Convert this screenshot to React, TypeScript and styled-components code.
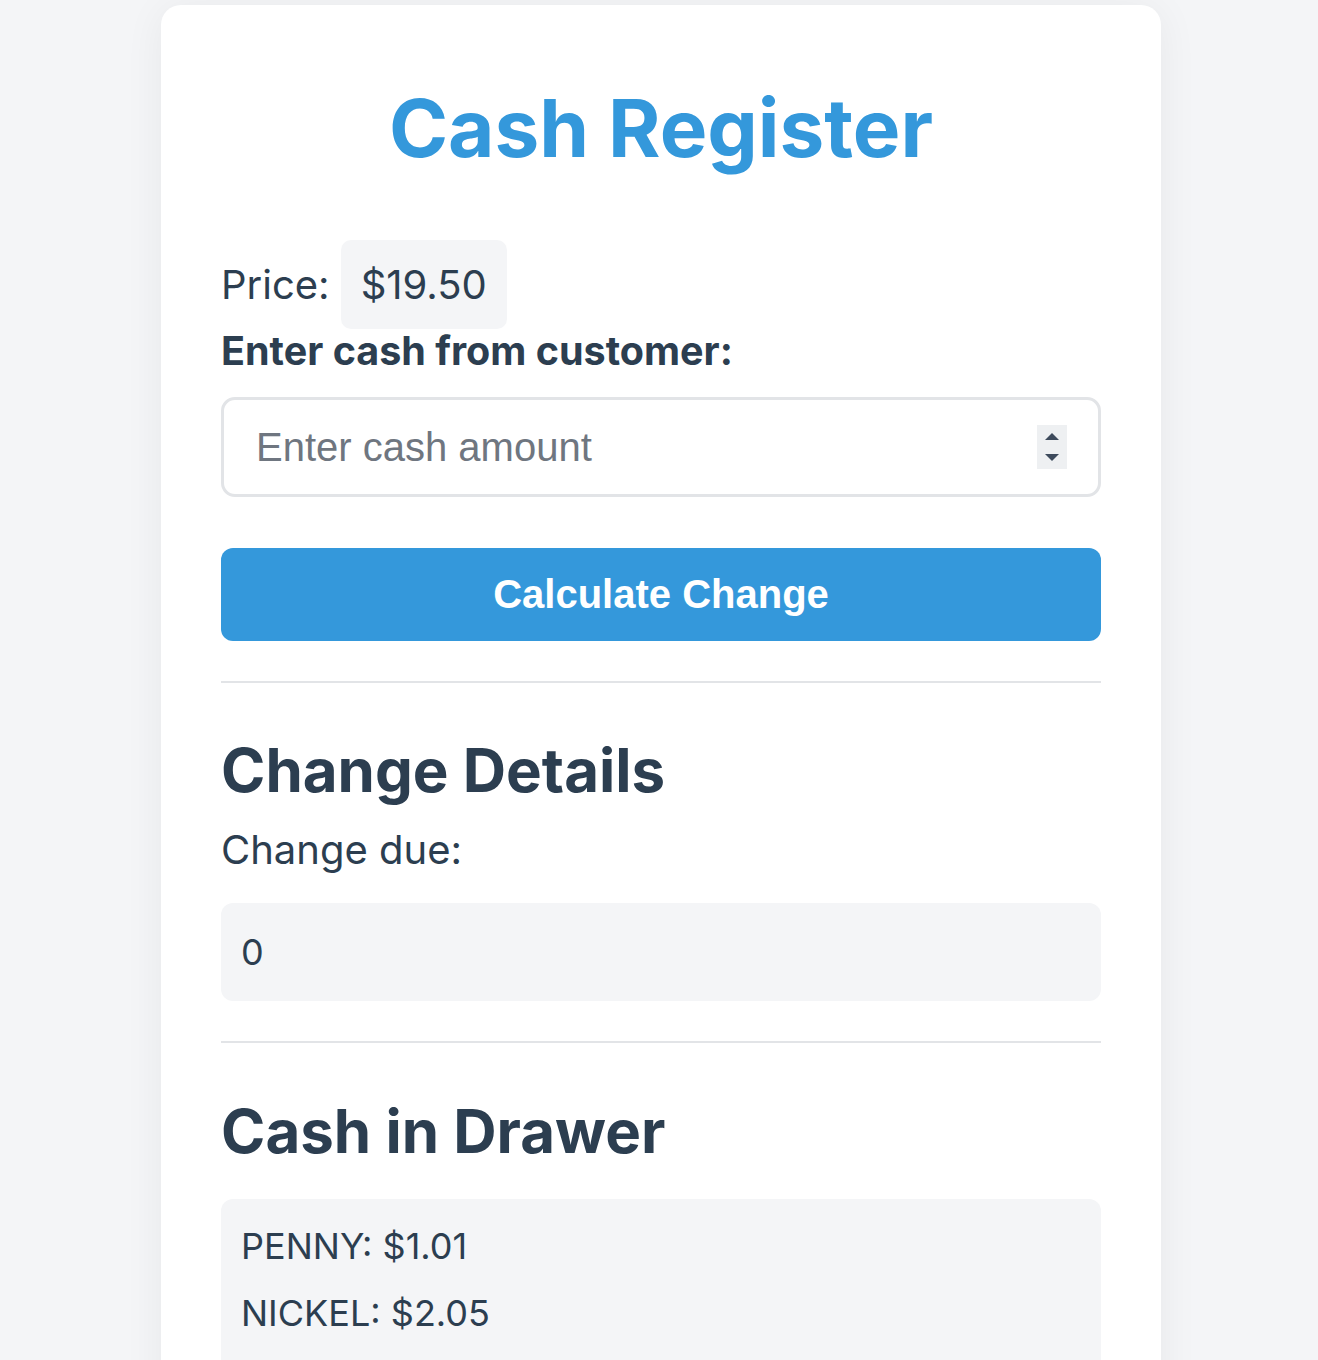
import React, { useState } from "react";
import styled, { createGlobalStyle } from "styled-components";

const GlobalStyle = createGlobalStyle`
  * {
    box-sizing: border-box;
  }

  body {
    margin: 0;
    background-color: #f4f5f7;
    font-family: Inter, "Noto Sans", sans-serif;
    color: #2c3e50;
  }
`;

const Page = styled.div`
  display: flex;
  justify-content: center;
  padding: 5px 0 0 4px;
  min-height: 1360px;
`;

const Card = styled.main`
  width: 1000px;
  background-color: #fff;
  border-radius: 20px;
  padding: 74px 60px 60px;
  box-shadow: 0 4px 40px rgba(0, 0, 0, 0.06);
`;

const Title = styled.h1`
  margin: 0 0 64px;
  font-size: 80px;
  font-weight: 700;
  color: #3498db;
  text-align: center;
  line-height: normal;
`;

const PriceRow = styled.div`
  display: flex;
  align-items: center;
  gap: 11px;
  font-size: 40px;
`;

const PriceTag = styled.span`
  display: inline-block;
  padding: 20px;
  border-radius: 10px;
  background-color: #f4f5f7;
`;

const Label = styled.label`
  display: block;
  margin: -2px 0 22px;
  font-size: 39.5px;
  font-weight: 700;
`;

const InputWrapper = styled.div`
  position: relative;
`;

const CashInput = styled.input`
  display: block;
  width: 100%;
  padding: 25px 32px 24px;
  border: 3px solid #e2e4e7;
  border-radius: 14px;
  font-family: "Liberation Sans", Arial, sans-serif;
  font-size: 40px;
  color: #2c3e50;
  outline: none;
  -moz-appearance: textfield;

  &::placeholder {
    color: #6f7680;
  }

  &::-webkit-inner-spin-button,
  &::-webkit-outer-spin-button {
    -webkit-appearance: none;
    margin: 0;
  }
`;

const Spinner = styled.div`
  position: absolute;
  top: 50%;
  right: 34px;
  transform: translateY(-50%);
  width: 30px;
  height: 44px;
  display: flex;
  flex-direction: column;
  align-items: center;
  justify-content: space-between;
  padding: 8px 0;
  background-color: #eef0f2;
  pointer-events: none;
`;

const CalculateButton = styled.button`
  display: block;
  width: 100%;
  margin-top: 51px;
  padding: 24px;
  border: none;
  border-radius: 12px;
  background-color: #3498db;
  color: #fff;
  font-family: "Liberation Sans", Arial, sans-serif;
  font-size: 40px;
  font-weight: 700;
  cursor: pointer;
`;

const Divider = styled.hr`
  margin: 40px 0 0;
  border: none;
  border-top: 2px solid #e2e4e7;
`;

const SectionTitle = styled.h2<{ $top: number; $gap: number }>`
  margin: ${(p) => p.$top}px 0 ${(p) => p.$gap}px;
  font-size: 60px;
  font-weight: 700;
  line-height: normal;
`;

const Text = styled.p`
  margin: 0 0 29px;
  font-size: 40px;
`;

const InfoBox = styled.div`
  padding: 27px 20px;
  border-radius: 12px;
  background-color: #f4f5f7;
  font-size: 36px;
`;

const DrawerBox = styled.div`
  display: flex;
  flex-direction: column;
  gap: 23px;
  padding: 25px 20px;
  border-radius: 12px;
  background-color: #f4f5f7;
  font-size: 36px;
`;

const drawer: [string, number][] = [
  ["PENNY", 1.01],
  ["NICKEL", 2.05],
  ["DIME", 3.1],
  ["QUARTER", 4.25],
  ["ONE", 90],
  ["FIVE", 55],
  ["TEN", 20],
  ["TWENTY", 60],
  ["ONE HUNDRED", 100],
];

const App: React.FC = () => {
  const [cash, setCash] = useState("");

  return (
    <>
      <GlobalStyle />
      <Page>
        <Card>
          <Title>Cash Register</Title>
          <PriceRow>
            Price:
            <PriceTag>$19.50</PriceTag>
          </PriceRow>
          <Label htmlFor="cash">Enter cash from customer:</Label>
          <InputWrapper>
            <CashInput
              id="cash"
              type="number"
              placeholder="Enter cash amount"
              value={cash}
              onChange={(e) => setCash(e.target.value)}
            />
            <Spinner>
              <svg width="14" height="7" viewBox="0 0 14 7">
                <path d="M7 0 L14 7 L0 7 Z" fill="#3d4a5c" />
              </svg>
              <svg width="14" height="7" viewBox="0 0 14 7">
                <path d="M0 0 L14 0 L7 7 Z" fill="#3d4a5c" />
              </svg>
            </Spinner>
          </InputWrapper>
          <CalculateButton>Calculate Change</CalculateButton>
          <Divider />
          <SectionTitle $top={51} $gap={19}>
            Change Details
          </SectionTitle>
          <Text>Change due:</Text>
          <InfoBox>0</InfoBox>
          <Divider />
          <SectionTitle $top={52} $gap={32}>
            Cash in Drawer
          </SectionTitle>
          <DrawerBox>
            {drawer.map(([name, amount]) => (
              <div key={name}>
                {name}: ${amount.toFixed(2)}
              </div>
            ))}
          </DrawerBox>
        </Card>
      </Page>
    </>
  );
};

export default App;
